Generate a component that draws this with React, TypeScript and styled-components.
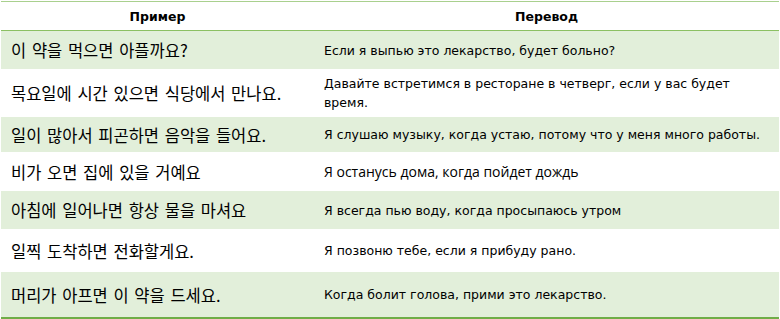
import React from "react";
import styled, { createGlobalStyle } from "styled-components";

interface Phrase {
  ko: string;
  ru: string;
  height: number;
  alt?: boolean;
}

const phrases: Phrase[] = [
  { ko: "이 약을 먹으면 아플까요?", ru: "Если я выпью это лекарство, будет больно?", height: 38 },
  {
    ko: "목요일에 시간 있으면 식당에서 만나요.",
    ru: "Давайте встретимся в ресторане в четверг, если у вас будет время.",
    height: 48,
  },
  {
    ko: "일이 많아서 피곤하면 음악을 들어요.",
    ru: "Я слушаю музыку, когда устаю, потому что у меня много работы.",
    height: 35,
  },
  { ko: "비가 오면 집에 있을 거예요", ru: "Я останусь дома, когда пойдет дождь", height: 39, alt: true },
  { ko: "아침에 일어나면 항상 물을 마셔요", ru: "Я всегда пью воду, когда просыпаюсь утром", height: 38 },
  { ko: "일찍 도착하면 전화할게요.", ru: "Я позвоню тебе, если я прибуду рано.", height: 43 },
  { ko: "머리가 아프면 이 약을 드세요.", ru: "Когда болит голова, прими это лекарство.", height: 45 },
];

export default function App() {
  return (
    <>
      <GlobalStyle />
      <Table>
        <HeaderRow>
          <HeadCell>Пример</HeadCell>
          <HeadCell>Перевод</HeadCell>
        </HeaderRow>
        {phrases.map((p, i) => (
          <Row key={i} $shaded={i % 2 === 0} $h={p.height}>
            <KoCell>{p.ko}</KoCell>
            <RuCell $alt={p.alt}>{p.ru}</RuCell>
          </Row>
        ))}
      </Table>
    </>
  );
}

const GlobalStyle = createGlobalStyle`
  html, body {
    margin: 0;
    padding: 0;
    background: #ffffff;
  }
`;

const Table = styled.div`
  width: 778px;
  margin: 1px 0 0 1px;
  border-top: 1px solid #a9d08e;
  border-bottom: 2px solid #70ad47;
`;

const HeaderRow = styled.div`
  display: grid;
  grid-template-columns: 313px 1fr;
  height: 28px;
  border-bottom: 1px solid #8cc063;
  align-items: center;
`;

const HeadCell = styled.div`
  text-align: center;
  font-family: "DejaVu Sans", Tahoma, sans-serif;
  font-size: 12.5px;
  font-weight: 700;
  color: #000000;
`;

const Row = styled.div<{ $shaded: boolean; $h: number }>`
  display: grid;
  grid-template-columns: 313px 1fr;
  align-items: center;
  height: ${(p) => p.$h}px;
  background: ${(p) => (p.$shaded ? "#e2efda" : "#ffffff")};
`;

const KoCell = styled.div`
  padding-left: 10px;
  font-family: "Noto Sans CJK KR", sans-serif;
  font-size: 16.5px;
  word-spacing: 2px;
  color: #000000;
`;

const RuCell = styled.div<{ $alt?: boolean }>`
  padding: 0 12px 0 10px;
  font-family: ${(p) => (p.$alt ? '"Open Sans", sans-serif' : '"DejaVu Sans", Tahoma, sans-serif')};
  font-size: ${(p) => (p.$alt ? "14px" : "12.5px")};
  font-weight: ${(p) => (p.$alt ? 500 : 400)};
  line-height: 19px;
  color: #000000;
`;
